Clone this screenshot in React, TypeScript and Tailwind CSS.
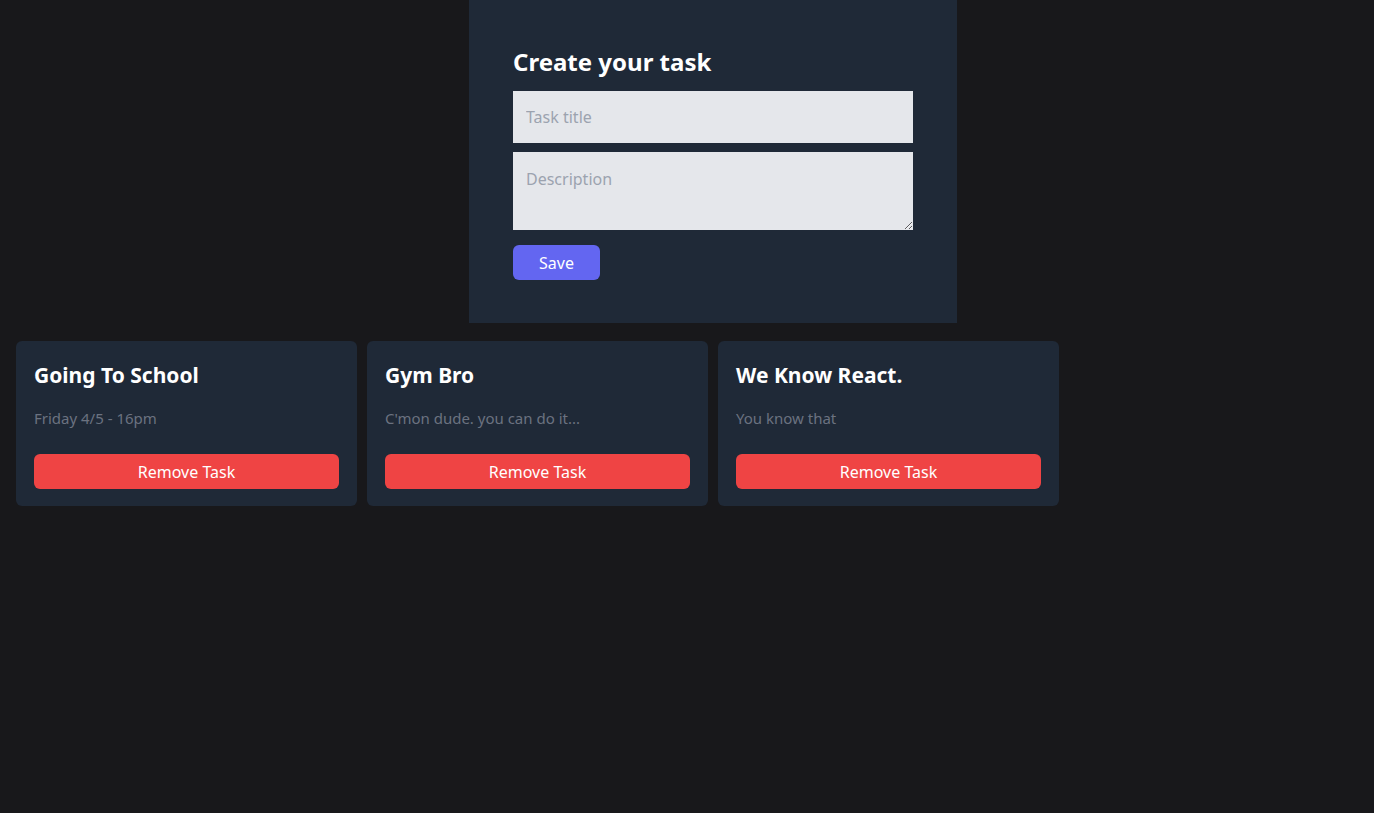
import { useState } from 'react'

interface Task {
  id: number
  title: string
  description: string
}

const initialTasks: Task[] = [
  { id: 1, title: 'Going To School', description: 'Friday 4/5 - 16pm' },
  { id: 2, title: 'Gym Bro', description: "C'mon dude. you can do it..." },
  { id: 3, title: 'We Know React.', description: 'You know that' },
]

const TaskCard = ({ task, onRemove }: { task: Task; onRemove: (id: number) => void }) => (
  <div className="bg-[#1f2937] rounded-md px-[18px] pt-[20px] pb-[17px]">
    <h2 className="text-[21px] font-bold text-white leading-[28px]">{task.title}</h2>
    <p className="text-[15px] text-[#6b7280] mt-[19px] leading-[20px]">{task.description}</p>
    <button
      onClick={() => onRemove(task.id)}
      className="mt-[26px] w-full h-[35px] bg-[#ef4444] text-white text-[16px] rounded-md"
    >
      Remove Task
    </button>
  </div>
)

const App = () => {
  const [tasks, setTasks] = useState<Task[]>(initialTasks)
  const [title, setTitle] = useState('')
  const [description, setDescription] = useState('')

  const handleSave = () => {
    if (!title.trim()) return
    setTasks([...tasks, { id: Date.now(), title, description }])
    setTitle('')
    setDescription('')
  }

  return (
    <div className="min-h-screen bg-[#18181b]" style={{ fontFamily: '"Noto Sans", "Open Sans", sans-serif' }}>
      {/* Form */}
      <div className="ml-[469px] w-[488px] bg-[#1f2937] px-[44px] pt-[44px] pb-[43px]">
        <h1 className="text-[24px] font-bold text-white leading-[36px]">Create your task</h1>
        <input
          value={title}
          onChange={(e) => setTitle(e.target.value)}
          placeholder="Task title"
          className="mt-[11px] block w-full h-[52px] bg-[#e5e7eb] px-[13px] text-[16px] text-gray-800 placeholder:text-[#9ca3af] outline-none"
        />
        <textarea
          value={description}
          onChange={(e) => setDescription(e.target.value)}
          placeholder="Description"
          className="mt-[9px] block w-full h-[78px] bg-[#e5e7eb] px-[13px] py-[16px] text-[16px] leading-[22px] text-gray-800 placeholder:text-[#9ca3af] outline-none"
        />
        <button
          onClick={handleSave}
          className="mt-[15px] w-[87px] h-[35px] bg-[#6366f1] text-white text-[16px] rounded-md"
        >
          Save
        </button>
      </div>

      {/* Tasks */}
      <div className="ml-4 mt-[18px] w-[1043px] grid grid-cols-3 gap-[10px]">
        {tasks.map((task) => (
          <TaskCard key={task.id} task={task} onRemove={(id) => setTasks(tasks.filter((t) => t.id !== id))} />
        ))}
      </div>
    </div>
  )
}

export default App
